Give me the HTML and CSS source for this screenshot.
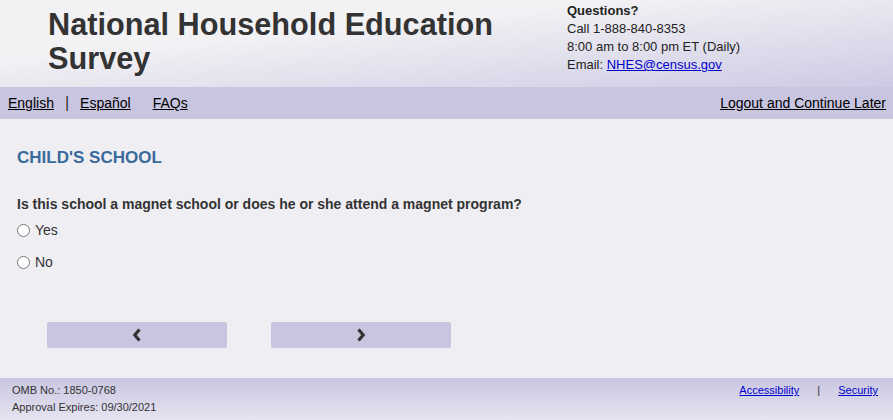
FILE: index.html
```html
<!DOCTYPE html>
<html lang="en">
<head>
    <meta charset="UTF-8">
    <meta name="viewport" content="width=device-width, initial-scale=1.0">
    <title>National Household Education Survey</title>
    <link rel="stylesheet" href="styles.css">
</head>
<body>
    <div class="header">
        <h1 class="site-title">National Household Education Survey</h1>
        <div class="contact">
            <strong>Questions?</strong><br>
            Call 1-888-840-8353<br>
            8:00 am to 8:00 pm ET (Daily)<br>
            Email: <a href="#">NHES@census.gov</a>
        </div>
    </div>
    <div class="nav-bar">
        <div class="nav-left">
            <a href="#">English</a>
            <span class="sep">|</span>
            <a href="#">Español</a>
            <a href="#" class="faq">FAQs</a>
        </div>
        <a href="#">Logout and Continue Later</a>
    </div>
    <div class="main">
        <h2 class="section-title">CHILD'S SCHOOL</h2>
        <p class="question">Is this school a magnet school or does he or she attend a magnet program?</p>
        <label class="option"><input type="radio" name="magnet"> Yes</label>
        <label class="option"><input type="radio" name="magnet"> No</label>
        <div class="nav-buttons">
            <button class="step-btn" aria-label="Previous">
                <svg width="10" height="14" viewBox="0 0 10 14"><path d="M7.5 1.5 L2.8 7 L7.5 12.5" fill="none" stroke="#333" stroke-width="3.2"/></svg>
            </button>
            <button class="step-btn" aria-label="Next">
                <svg width="10" height="14" viewBox="0 0 10 14"><path d="M2.5 1.5 L7.2 7 L2.5 12.5" fill="none" stroke="#333" stroke-width="3.2"/></svg>
            </button>
        </div>
    </div>
    <div class="footer">
        <div class="omb">
            OMB No.: 1850-0768<br>
            Approval Expires: 09/30/2021
        </div>
        <div class="footer-links">
            <a href="#">Accessibility</a>
            <span class="sep">|</span>
            <a href="#">Security</a>
        </div>
    </div>
</body>
</html>
```

FILE: styles.css
```css
/* General Styles */
body {
    margin: 0;
    font-family: "Liberation Sans", Arial, sans-serif;
    background: #efeef3;
    color: #333;
    height: 420px;
    display: flex;
    flex-direction: column;
}

a {
    color: #000;
}

.header {
    height: 87px;
    display: flex;
    background: linear-gradient(to bottom right, #f2f1f4 35%, #cdcbe4 100%);
}

.site-title {
    margin: 8px 0 0 48px;
    width: 500px;
    font-size: 30.7px;
    line-height: 34px;
    font-weight: bold;
    color: #333;
}

.contact {
    margin: 2px 0 0 19px;
    font-size: 13px;
    line-height: 18px;
    color: #222;
}

.contact a {
    color: #00c;
}

.nav-bar {
    height: 32px;
    background: #c8c5e0;
    display: flex;
    align-items: center;
    justify-content: space-between;
    padding: 0 7px 0 8px;
    font-size: 14px;
}

.nav-left {
    display: flex;
    align-items: center;
}

.nav-left .sep {
    margin: 0 11px;
    font-size: 16px;
    color: #333;
}

.nav-left .faq {
    margin-left: 22px;
}

.main {
    flex: 1;
    padding: 0 17px;
}

.section-title {
    margin: 30px 0 0;
    font-size: 17px;
    line-height: 18px;
    color: #3a6a9c;
}

.question {
    margin: 28px 0 0;
    font-size: 14px;
    font-weight: bold;
    line-height: 18px;
}

.option {
    display: flex;
    align-items: center;
    font-size: 14px;
    height: 18px;
    margin-top: 8px;
}

.option + .option {
    margin-top: 14px;
}

.option input {
    margin: 0 5px 0 0;
    width: 13px;
    height: 13px;
}

.nav-buttons {
    display: flex;
    gap: 44px;
    margin: 51px 0 0 30px;
}

.step-btn {
    width: 180px;
    height: 26px;
    border: none;
    border-radius: 2px;
    background: #c8c5e0;
    display: flex;
    align-items: center;
    justify-content: center;
    padding: 0;
}

.footer {
    height: 42px;
    background: linear-gradient(to bottom, #c9c6e1, #e6e4f0);
    display: flex;
    justify-content: space-between;
    padding: 0 15px 0 12px;
    font-size: 11px;
    line-height: 17px;
}

.omb {
    padding-top: 4px;
}

.footer-links {
    padding-top: 4px;
}

.footer-links a {
    color: #00c;
}

.footer-links .sep {
    margin: 0 15px;
}
```
